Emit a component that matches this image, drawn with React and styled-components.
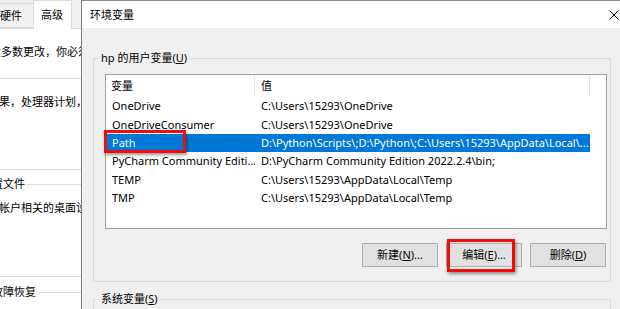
import React from 'react';
import styled, { createGlobalStyle } from 'styled-components';

const GlobalStyle = createGlobalStyle`
  html, body { margin: 0; padding: 0; }
  body {
    width: 620px;
    height: 309px;
    overflow: hidden;
    background: #ffffff;
    font-family: "Noto Sans", "Noto Sans CJK SC", sans-serif;
  }
  * { box-sizing: border-box; }
`;

const Screen = styled.div`
  display: flex;
  width: 620px;
  height: 309px;
  overflow: hidden;
  font-size: 11px;
  line-height: 16px;
  color: #000;
`;

/* ---------- background window (System Properties, Advanced tab) ---------- */

const BackWindow = styled.div`
  flex: none;
  width: 81px;
  display: flex;
  flex-direction: column;
  background: #f0f0f0;
  overflow: hidden;
`;

const TabStrip = styled.div`
  flex: none;
  display: flex;
  align-items: flex-end;
  height: 28px;
  margin-left: -12px;
  position: relative;
  z-index: 1;
`;

const Tab = styled.div`
  flex: none;
  display: flex;
  align-items: center;
  height: ${p => (p.$active ? '29px' : '25px')};
  margin-bottom: ${p => (p.$active ? '-1px' : '0')};
  margin-left: ${p => (p.$active ? '-1px' : '0')};
  padding: ${p => (p.$active ? '0 8px 1px 7px' : '1px 11px 0')};
  background: ${p => (p.$active ? '#ffffff' : '#f0f0f0')};
  border: 1px solid #d9d9d9;
  border-bottom: ${p => (p.$active ? 'none' : '1px solid #d9d9d9')};
  white-space: nowrap;
`;

const TabPage = styled.div`
  flex: 1;
  background: #ffffff;
  border-top: 1px solid #d9d9d9;
  overflow: hidden;
`;

const PageContent = styled.div`
  width: 420px;
  margin-left: -56px;
  padding-top: 15px;
  white-space: nowrap;
`;

const Intro = styled.div`
  padding-left: 13px;
  margin-bottom: 10px;
`;

const PageGroup = styled.fieldset`
  margin: ${p => p.$gap}px 0 0 0;
  padding: 8px 0 ${p => p.$bottom}px 13px;
  border: 1px solid #dcdcdc;
  min-inline-size: 0;
`;

const PageLegend = styled.legend`
  padding: 0 1px;
  line-height: 16px;
`;

const PageText = styled.div`
  padding-left: 8px;
`;

/* ---------- front dialog (环境变量) ---------- */

const Dialog = styled.div`
  flex: 1;
  display: flex;
  flex-direction: column;
  border-left: 1px solid #7a7a7a;
  border-top: 1px solid #8c8c8c;
  background: #f0f0f0;
  overflow: hidden;
`;

const TitleBar = styled.div`
  flex: none;
  height: 27px;
  display: flex;
  align-items: center;
  padding-left: 8px;
  background: #ffffff;
`;

const Title = styled.span`
  flex: 1;
  padding-top: 1px;
`;

const CloseGlyph = styled.svg`
  flex: none;
  width: 10px;
  height: 10px;
  margin-right: 1px;
`;

const DialogBody = styled.div`
  flex: 1;
  padding: 22px 0 0 11px;
  overflow: hidden;
`;

const Group = styled.fieldset`
  width: 518px;
  margin: ${p => p.$gap}px 0 0 0;
  padding: 8px 3px 14px 5px;
  border: 1px solid #dcdcdc;
  min-inline-size: 0;
`;

const Legend = styled.legend`
  padding: 0 2px;
  line-height: 16px;
`;

const GroupInner = styled.div`
  padding-left: 6px;
`;

const ListBox = styled.div`
  width: 502px;
  height: 155px;
  border: 1px solid #a0a0a0;
  background: #ffffff;
  display: flex;
  flex-direction: column;
`;

const HeaderRow = styled.div`
  flex: none;
  display: flex;
  height: 22px;
`;

const HeaderCell = styled.div`
  flex: none;
  width: ${p => p.$width}px;
  padding-left: ${p => p.$pad}px;
  display: flex;
  align-items: center;
  border-right: 1px solid #e5e5e5;
  margin: 1px 0 1px 0;
`;

const Row = styled.div`
  position: relative;
  flex: none;
  display: flex;
  width: 484px;
  height: 18.4px;
  align-items: center;
  background: ${p => (p.$selected ? '#0078d7' : 'transparent')};
  color: ${p => (p.$selected ? '#ffffff' : '#000000')};
`;

const Cell = styled.div`
  flex: none;
  width: ${p => p.$width}px;
  padding-left: 6px;
  white-space: nowrap;
  overflow: hidden;
`;

const ButtonRow = styled.div`
  display: flex;
  justify-content: flex-end;
  gap: 8px;
  margin-top: 14px;
  padding-right: 1px;
`;

const ButtonSlot = styled.div`
  position: relative;
`;

const Button = styled.button`
  width: 76px;
  height: 24px;
  margin: 0;
  padding: 0;
  border: 1px solid #adadad;
  background: #e1e1e1;
  font-family: inherit;
  font-size: 11px;
  color: #000;
  line-height: 16px;
`;

const Highlight = styled.div`
  position: absolute;
  left: ${p => p.$left}px;
  top: ${p => p.$top}px;
  width: ${p => p.$w}px;
  height: ${p => p.$h}px;
  border: 3px solid #f20d0d;
  box-shadow: 1px 2px 3px rgba(0, 0, 0, 0.4);
  pointer-events: none;
`;

const rows = [
  { name: 'OneDrive', value: 'C:\\Users\\15293\\OneDrive' },
  { name: 'OneDriveConsumer', value: 'C:\\Users\\15293\\OneDrive' },
  {
    name: 'Path',
    value: 'D:\\Python\\Scripts\\;D:\\Python\\;C:\\Users\\15293\\AppData\\Local\\...',
    selected: true,
  },
  { name: 'PyCharm Community Editi...', value: 'D:\\PyCharm Community Edition 2022.2.4\\bin;' },
  { name: 'TEMP', value: 'C:\\Users\\15293\\AppData\\Local\\Temp' },
  { name: 'TMP', value: 'C:\\Users\\15293\\AppData\\Local\\Temp' },
];

export default function App() {
  return (
    <>
      <GlobalStyle />
      <Screen>
        <BackWindow>
          <TabStrip>
            <Tab>硬件</Tab>
            <Tab $active>高级</Tab>
          </TabStrip>
          <TabPage>
            <PageContent>
              <Intro>要进行大多数更改，你必须作为管理员登录。</Intro>
              <PageGroup $gap={0} $bottom={59}>
                <PageLegend>性能</PageLegend>
                <PageText>视觉效果，处理器计划，内存使用，以及虚拟内存</PageText>
              </PageGroup>
              <PageGroup $gap={6} $bottom={60}>
                <PageLegend>用户配置文件</PageLegend>
                <PageText>与登录帐户相关的桌面设置</PageText>
              </PageGroup>
              <PageGroup $gap={7} $bottom={40}>
                <PageLegend>启动和故障恢复</PageLegend>
                <PageText>系统启动、系统故障和调试信息</PageText>
              </PageGroup>
            </PageContent>
          </TabPage>
        </BackWindow>

        <Dialog>
          <TitleBar>
            <Title>环境变量</Title>
            <CloseGlyph viewBox="0 0 10 10">
              <path d="M0.5 0.5 L9.5 9.5 M9.5 0.5 L0.5 9.5" stroke="#000" strokeWidth="1" fill="none" />
            </CloseGlyph>
          </TitleBar>
          <DialogBody>
            <Group $gap={0}>
              <Legend>hp 的用户变量(<u>U</u>)</Legend>
              <GroupInner>
                <ListBox>
                  <HeaderRow>
                    <HeaderCell $width={149} $pad={5}>变量</HeaderCell>
                    <HeaderCell $width={335} $pad={6}>值</HeaderCell>
                  </HeaderRow>
                  {rows.map(r => (
                    <Row key={r.name} $selected={r.selected}>
                      <Cell $width={149}>{r.name}</Cell>
                      <Cell $width={335}>{r.value}</Cell>
                      {r.selected && <Highlight $left={-2} $top={-4} $w={82} $h={23} />}
                    </Row>
                  ))}
                </ListBox>
                <ButtonRow>
                  <ButtonSlot>
                    <Button>新建(<u>N</u>)...</Button>
                  </ButtonSlot>
                  <ButtonSlot>
                    <Button>编辑(<u>E</u>)...</Button>
                    <Highlight $left={1} $top={-4} $w={68} $h={33} />
                  </ButtonSlot>
                  <ButtonSlot>
                    <Button>删除(<u>D</u>)</Button>
                  </ButtonSlot>
                </ButtonRow>
              </GroupInner>
            </Group>
            <Group $gap={9}>
              <Legend>系统变量(<u>S</u>)</Legend>
              <GroupInner>
                <ListBox />
              </GroupInner>
            </Group>
          </DialogBody>
        </Dialog>
      </Screen>
    </>
  );
}
